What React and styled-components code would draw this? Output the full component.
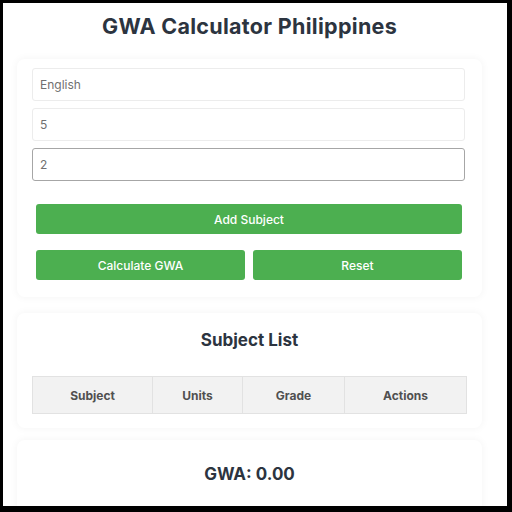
import React from 'react'
import styled, { createGlobalStyle } from 'styled-components'

const Global = createGlobalStyle`
  html, body {
    margin: 0;
    padding: 0;
    background: #000;
  }
  * { box-sizing: border-box; }
  body {
    font-family: Inter, "Noto Sans", sans-serif;
  }
`

const Frame = styled.div`
  margin: 3px 5px 0 3px;
  height: 503px;
  background: #fff;
  overflow: hidden;
  padding: 0 25px 0 14px;
`

const Title = styled.h1`
  margin: 0;
  padding-top: 10px;
  height: 56px;
  text-align: center;
  font-size: 21.5px;
  font-weight: 700;
  color: #2c3440;
  letter-spacing: 0.3px;
`

const Card = styled.div`
  background: #fff;
  border-radius: 8px;
  box-shadow: 0 0 8px rgba(0, 0, 0, 0.05);
  padding: ${p => p.pad || '15px'};
  margin-bottom: ${p => p.gap || '16px'};
  text-align: center;
`

const Fields = styled.div`
  display: flex;
  flex-direction: column;
  gap: 7px;
`

const Field = styled.input`
  height: 33px;
  width: 100%;
  border: 1px solid ${p => (p.focused ? '#a6a6a6' : '#ececec')};
  border-radius: 3px;
  padding: 0 7px;
  font-family: inherit;
  font-size: 12px;
  color: #707070;
  outline: none;
  background: #fff;
`

const Actions = styled.div`
  display: flex;
  flex-direction: column;
  gap: 16px;
  margin: 23px 3px 0 4px;
`

const Row = styled.div`
  display: flex;
  gap: 8px;
`

const Button = styled.button`
  flex: 1;
  height: 30px;
  border: none;
  border-radius: 3px;
  background: #4caf50;
  color: #fff;
  font-family: inherit;
  font-size: 12px;
  font-weight: 500;
  cursor: pointer;
`

const Heading = styled.h2`
  margin: 0;
  font-size: 17px;
  font-weight: 700;
  color: #2c3440;
`

const Table = styled.table`
  width: 100%;
  margin-top: 26px;
  border-collapse: collapse;
  table-layout: fixed;
`

const Th = styled.th`
  width: ${p => p.w};
  height: 37px;
  background: #f2f2f2;
  border: 1px solid #e2e2e2;
  font-size: 12px;
  font-weight: 700;
  color: #505050;
`

export default function App() {
  return (
    <>
      <Global />
      <Frame>
        <Title>GWA Calculator Philippines</Title>
        <Card pad="9px 17px 17px 15px">
          <Fields>
            <Field defaultValue="English" />
            <Field defaultValue="5" />
            <Field defaultValue="2" focused />
          </Fields>
          <Actions>
            <Row>
              <Button>Add Subject</Button>
            </Row>
            <Row>
              <Button>Calculate GWA</Button>
              <Button>Reset</Button>
            </Row>
          </Actions>
        </Card>
        <Card pad="17px 15px 14px 15px" gap="12px">
          <Heading>Subject List</Heading>
          <Table>
            <thead>
              <tr>
                <Th w="120px">Subject</Th>
                <Th w="90px">Units</Th>
                <Th w="102px">Grade</Th>
                <Th>Actions</Th>
              </tr>
            </thead>
          </Table>
        </Card>
        <Card pad="24px 15px 28px">
          <Heading>GWA: 0.00</Heading>
        </Card>
      </Frame>
    </>
  )
}
